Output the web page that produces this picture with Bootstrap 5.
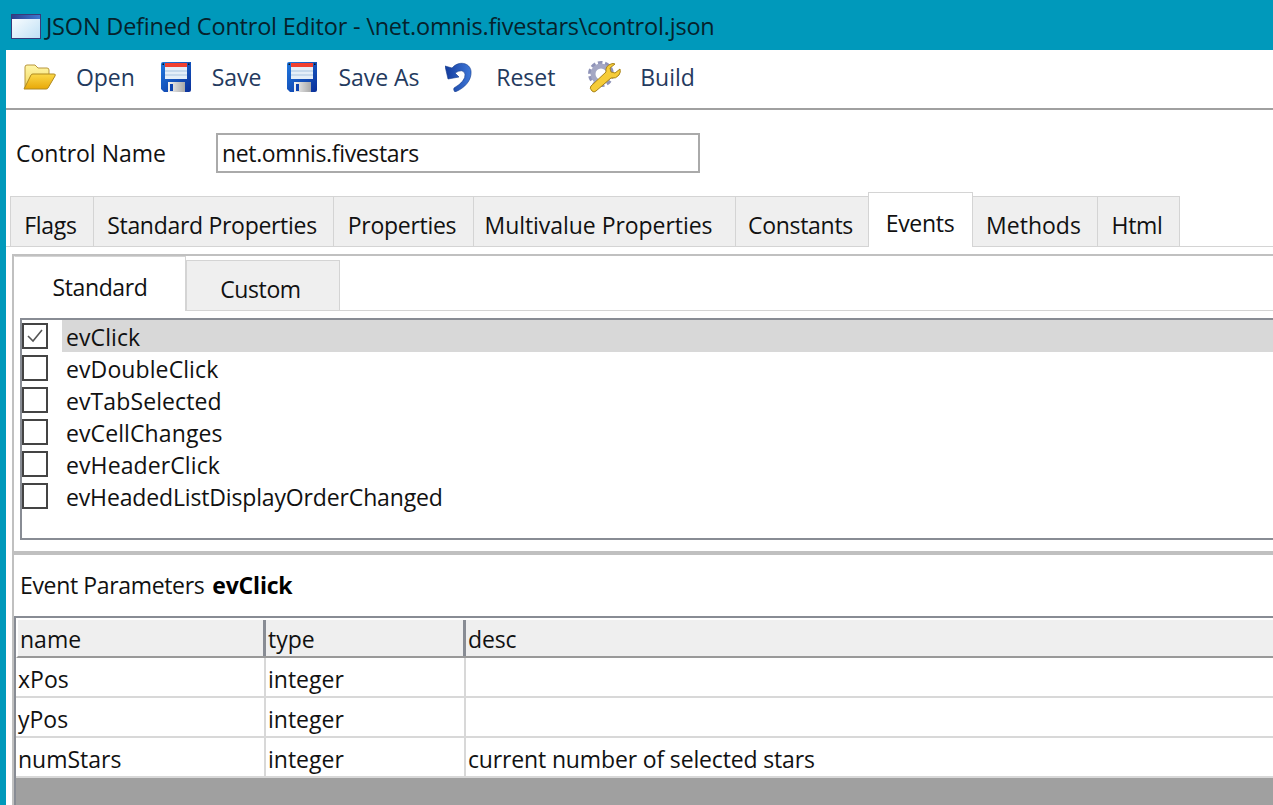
<!DOCTYPE html>
<html lang="en">
<head>
<meta charset="utf-8">
<title>JSON Defined Control Editor</title>
<link href="https://cdn.jsdelivr.net/npm/bootstrap@5.3.0/dist/css/bootstrap.min.css" rel="stylesheet">
<style>
html,body{height:805px;overflow:hidden}
body{background:#fff;font-family:"Open Sans","Noto Sans",sans-serif;font-size:23px;letter-spacing:-.15px;color:#111;line-height:1}
.app-frame{width:1273px;height:805px;border-left:6px solid #0099bb;overflow:hidden}
.title-strip{height:50px;background:#0099bb;margin-left:-6px;padding-left:11px;color:#06222c;gap:5px;font-size:23.5px;letter-spacing:-.2px}
.title-strip svg{flex:none;margin-top:2px}
.title-strip span{padding-top:4px}
.tool-strip{height:60px;border-bottom:2px solid #a0a0a0;padding:0 0 4px 17px;color:#243a5e;letter-spacing:-.05px}
.tool-item{display:flex;align-items:center}
.tool-item svg{flex:none}
.name-row{height:86px;padding-left:10px}
.name-label{width:200px;letter-spacing:0}
.name-box{width:484px;height:40px;border:2px solid #aaa;padding-left:4px;display:flex;align-items:center;letter-spacing:-.35px}
.tab-strip{height:50px;padding-left:5px;border-bottom:1px solid #d4d4d4;box-sizing:content-box;letter-spacing:-.3px}
.tab-item{height:50px;background:#efefef;border:1px solid #d4d4d4;border-bottom:0;margin-left:-1px;display:flex;align-items:center;justify-content:center;padding:8px 3px 0 0}
.tab-item.is-on{background:#fff;height:55px;margin-top:-4px;padding:7px 1px 0 0;position:relative;z-index:1;margin-bottom:-1px}
.tab-wide{letter-spacing:-.05px;padding-right:12px}
.tab-flat{letter-spacing:0}
.panel-box{margin-top:7px;margin-left:6px;border-top:2px solid #c0c0c0;border-left:2px solid #c0c0c0;height:560px;display:flex;flex-direction:column;overflow:hidden}
.sub-tabs{height:55px;border-bottom:1px solid #d4d4d4;align-items:flex-end;flex:none;letter-spacing:-.4px}
.sub-tab{background:#efefef;border:1px solid #d4d4d4;border-bottom:0;height:50px;width:154px;display:flex;align-items:center;justify-content:center;padding:8px 5px 0 0}
.sub-tab.is-on{background:#fff;height:55px;width:172px;padding:6px 0 0;margin-bottom:-1px;border-left-color:#fff}
.list-frame{margin:7px 0 0 6px;height:222px;border:2px solid #888c94;border-right:0;flex:none}
.ev-row{height:32px;display:flex;align-items:center}
.tick-box{width:26px;height:26px;border:2px solid #444;flex:none;display:flex;align-items:center;justify-content:center;background:#fff}
.ev-name{flex:1;height:32px;margin-left:14px;padding:2px 0 0 4px;display:flex;align-items:center;letter-spacing:.1px}
.ev-long{letter-spacing:-.15px}
.ev-row.is-sel .ev-name{background:#d8d8d8}
.split-bar{height:4px;background:#c0c0c0;margin-top:11px;flex:none}
.param-head{height:61px;padding:0 0 0 6px;display:flex;align-items:center;flex:none;letter-spacing:-.35px}
.param-head strong{font-weight:700;margin-left:8px;color:#000;letter-spacing:-.2px}
.grid-box{flex:1;border-top:2px solid #888c94;border-left:2px solid #888c94;background:#a0a0a0;letter-spacing:0}
.grid-head{height:40px;display:flex;background:#efefef;border-top:2px solid #fff;border-bottom:2px solid #999;border-left:2px solid #fff}
.grid-row{height:40px;display:flex;background:#fff;border-bottom:2px solid #d8d8d8}
.col-a{width:250px;flex:none;display:flex;align-items:center;padding:5px 0 0 2px;border-right:2px solid #d8d8d8}
.col-b{width:200px;flex:none;display:flex;align-items:center;padding:5px 0 0 2px;border-right:2px solid #d8d8d8}
.col-c{flex:1;display:flex;align-items:center;padding:5px 0 0 2px;letter-spacing:-.15px}
.grid-head .col-a,.grid-head .col-b{border-right:3px solid #888c94;padding-top:3px}
.grid-head .col-a{width:248px;padding-left:2px}
.grid-head .col-b{padding-left:2px}
.grid-head .col-c{padding:3px 0 0 2px}
</style>
</head>
<body>
<div class="app-frame">
  <div class="title-strip d-flex align-items-center">
    <svg width="30" height="25" viewBox="0 0 30 25"><defs><linearGradient id="w" x1="0" y1="0" x2="1" y2="1"><stop offset="0" stop-color="#fff"/><stop offset="1" stop-color="#bfe0f5"/></linearGradient><linearGradient id="t" x1="0" y1="0" x2="1" y2="0"><stop offset="0" stop-color="#2d3f8c"/><stop offset="1" stop-color="#3f78d0"/></linearGradient></defs><rect x=".5" y=".5" width="29" height="24" fill="url(#w)" stroke="#3a3a78"/><rect x="1" y="1" width="28" height="4" fill="url(#t)"/></svg>
    <span>JSON Defined Control Editor - \net.omnis.fivestars\control.json</span>
  </div>

  <div class="tool-strip d-flex align-items-center">
    <div class="tool-item">
      <svg width="33" height="28" viewBox="0 0 33 28"><defs><linearGradient id="fb" x1="0" y1="0" x2="0" y2="1"><stop offset="0" stop-color="#fff6a8"/><stop offset="1" stop-color="#f2d860"/></linearGradient><linearGradient id="ff" x1="0" y1="0" x2="0" y2="1"><stop offset="0" stop-color="#fbd848"/><stop offset="1" stop-color="#e8a808"/></linearGradient></defs><path d="M2 25V4q0-2 2-2h8l3 3h9q2 0 2 2v5H9z" fill="url(#fb)" stroke="#b8963c"/><path d="M1 26 8 12q.5-1 2-1h21q2 0 1 2l-7 12q-.5 1-2 1z" fill="url(#ff)" stroke="#b08a20"/></svg>
      <span style="margin-left:20px">Open</span>
    </div>
    <div class="tool-item" style="margin-left:26px">
      <svg width="30" height="30" viewBox="0 0 30 30"><defs><linearGradient id="fd" x1="0" y1="0" x2="1" y2="1"><stop offset="0" stop-color="#1f78e0"/><stop offset="1" stop-color="#0a2f98"/></linearGradient><linearGradient id="fs" x1="0" y1="0" x2="1" y2="0"><stop offset="0" stop-color="#f4f4f4"/><stop offset="1" stop-color="#a8a8a8"/></linearGradient></defs><path d="M0 2q0-2 2-2h28v28q0 2-2 2H3l-3-3z" fill="url(#fd)"/><rect x="4" y="1" width="22" height="4" fill="#f04030"/><rect x="4" y="5" width="22" height="12" fill="#e4eef8"/><path d="M4 9h22M4 13h22" stroke="#a8c4e0"/><rect x="1.5" y="1.5" width="1.5" height="1.5" fill="#111"/><rect x="27" y="1.5" width="1.5" height="1.5" fill="#111"/><rect x="7" y="20" width="17" height="10" fill="url(#fs)"/><rect x="9" y="22" width="3" height="7" fill="#0b42b0"/></svg>
      <span style="margin-left:21px">Save</span>
    </div>
    <div class="tool-item" style="margin-left:26px">
      <svg width="30" height="30" viewBox="0 0 30 30"><path d="M0 2q0-2 2-2h28v28q0 2-2 2H3l-3-3z" fill="url(#fd)"/><rect x="4" y="1" width="22" height="4" fill="#f04030"/><rect x="4" y="5" width="22" height="12" fill="#e4eef8"/><path d="M4 9h22M4 13h22" stroke="#a8c4e0"/><rect x="1.5" y="1.5" width="1.5" height="1.5" fill="#111"/><rect x="27" y="1.5" width="1.5" height="1.5" fill="#111"/><rect x="7" y="20" width="17" height="10" fill="url(#fs)"/><rect x="9" y="22" width="3" height="7" fill="#0b42b0"/></svg>
      <span style="margin-left:21px">Save As</span>
    </div>
    <div class="tool-item" style="margin-left:26px">
      <svg width="27" height="30" viewBox="0 0 27 30"><defs><linearGradient id="ud" x1="0" y1="0" x2="1" y2="0"><stop offset="0" stop-color="#123a9c"/><stop offset="1" stop-color="#3f78d8"/></linearGradient></defs><path d="M0 4 3 17 14 15 10 11Q18 6 20 12 21 19 9 26q-1 2 1 4C20 26 27 18 26 9 25 1 14-2 7 6z" fill="url(#ud)" stroke="#123a8c" stroke-width=".6"/></svg>
      <span style="margin-left:24px">Reset</span>
    </div>
    <div class="tool-item" style="margin-left:33px">
      <svg width="33" height="32" viewBox="0 0 33 32"><circle cx="13" cy="13" r="10" fill="none" stroke="#8f93b8" stroke-width="6" stroke-dasharray="4 2.3"/><circle cx="13" cy="13" r="8" fill="none" stroke="#a4a7c4" stroke-width="5"/><path d="M4 30q-3-3-1-5L18 11q-1-6 5-8 2-1 4 0l-5 4 1 4 4 1 5-4q1 3-1 6-3 4-8 3L8 30q-2 2-4 0z" fill="#f6cc38" stroke="#a88318"/></svg>
      <span style="margin-left:19px">Build</span>
    </div>
  </div>

  <div class="name-row d-flex align-items-center">
    <span class="name-label">Control Name</span>
    <div class="name-box">net.omnis.fivestars</div>
  </div>

  <div class="tab-strip d-flex">
    <div class="tab-item" style="width:84px">Flags</div>
    <div class="tab-item" style="width:241px">Standard Properties</div>
    <div class="tab-item" style="width:141px">Properties</div>
    <div class="tab-item tab-wide" style="width:263px">Multivalue Properties</div>
    <div class="tab-item" style="width:134px">Constants</div>
    <div class="tab-item is-on" style="width:105px">Events</div>
    <div class="tab-item tab-flat" style="width:126px">Methods</div>
    <div class="tab-item" style="width:83px">Html</div>
  </div>

  <div class="panel-box">
    <div class="sub-tabs d-flex">
      <div class="sub-tab is-on">Standard</div>
      <div class="sub-tab">Custom</div>
    </div>
    <div class="list-frame">
      <div class="ev-row is-sel"><div class="tick-box"><svg width="16" height="14" viewBox="0 0 16 14"><path d="M1 7l5 5L15 1" fill="none" stroke="#555" stroke-width="1.6"/></svg></div><div class="ev-name">evClick</div></div>
      <div class="ev-row"><div class="tick-box"></div><div class="ev-name">evDoubleClick</div></div>
      <div class="ev-row"><div class="tick-box"></div><div class="ev-name">evTabSelected</div></div>
      <div class="ev-row"><div class="tick-box"></div><div class="ev-name">evCellChanges</div></div>
      <div class="ev-row"><div class="tick-box"></div><div class="ev-name">evHeaderClick</div></div>
      <div class="ev-row"><div class="tick-box"></div><div class="ev-name ev-long">evHeadedListDisplayOrderChanged</div></div>
    </div>
    <div class="split-bar"></div>
    <div class="param-head">Event Parameters <strong>evClick</strong></div>
    <div class="grid-box">
      <div class="grid-head"><div class="col-a">name</div><div class="col-b">type</div><div class="col-c">desc</div></div>
      <div class="grid-row"><div class="col-a">xPos</div><div class="col-b">integer</div><div class="col-c"></div></div>
      <div class="grid-row"><div class="col-a">yPos</div><div class="col-b">integer</div><div class="col-c"></div></div>
      <div class="grid-row"><div class="col-a">numStars</div><div class="col-b">integer</div><div class="col-c">current number of selected stars</div></div>
    </div>
  </div>
</div>
<script src="https://cdn.jsdelivr.net/npm/bootstrap@5.3.0/dist/js/bootstrap.bundle.min.js"></script>
</body>
</html>
